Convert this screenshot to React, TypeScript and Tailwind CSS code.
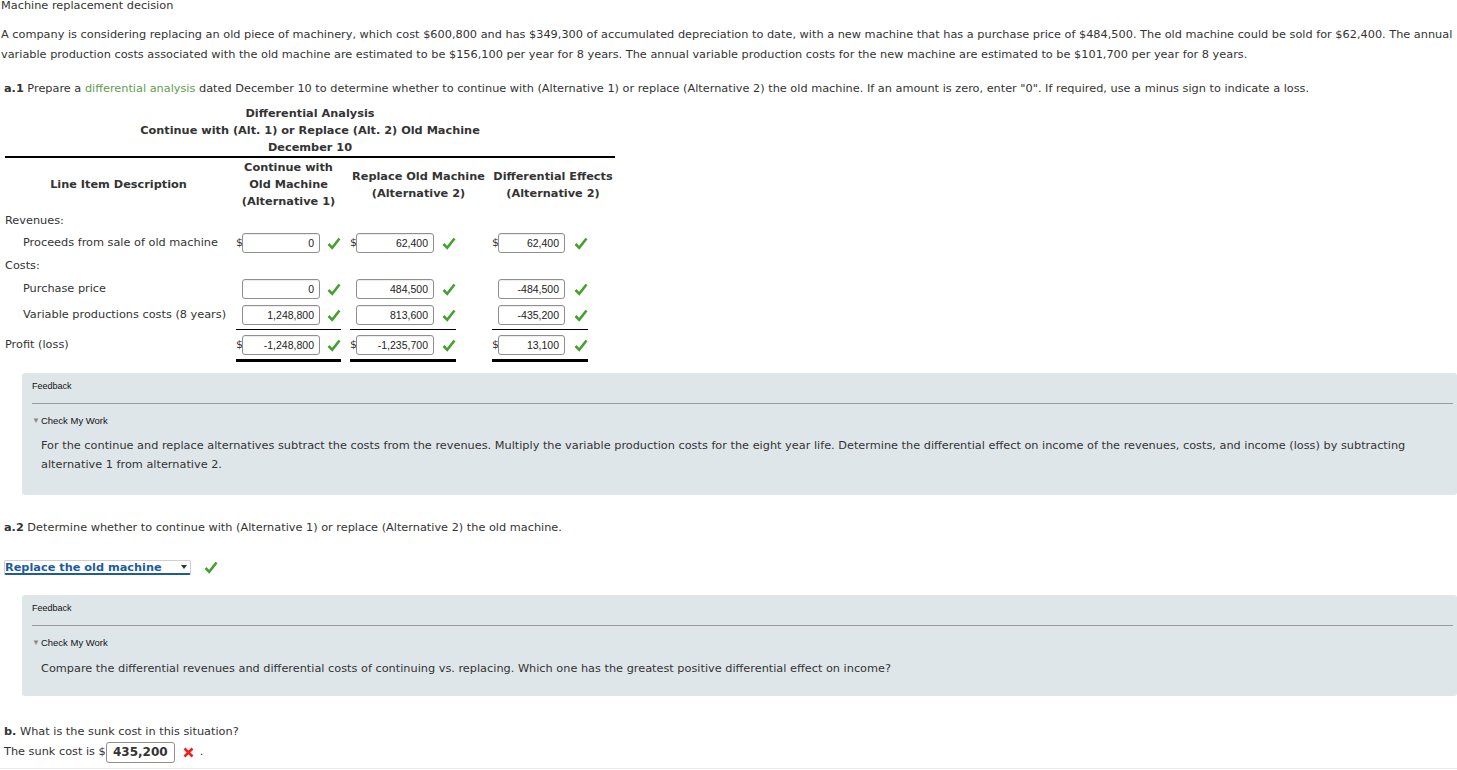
import type { ReactNode } from "react";

const body = "font-['DejaVu_Sans',Verdana,sans-serif] text-[11.3px] text-[#333]";

function Check() {
  return (
    <svg width="14" height="13" viewBox="0 0 14 13" className="shrink-0">
      <path d="M1.5 7 L5.2 10.8 L12.5 1.5" fill="none" stroke="#45a12f" strokeWidth="2.6" strokeLinejoin="miter" />
    </svg>
  );
}

function Cross() {
  return (
    <svg width="11" height="11" viewBox="0 0 11 11" className="shrink-0">
      <path d="M1.5 1.5 L9.5 9.5 M9.5 1.5 L1.5 9.5" fill="none" stroke="#e8231f" strokeWidth="2.6" />
    </svg>
  );
}

type CellProps = {
  value?: string;
  dollar?: boolean;
  pad: string;
  inputW: string;
  gap: string;
  line?: "single" | "double";
};

function AmountCell({ value, dollar, pad, inputW, gap, line }: CellProps) {
  if (value === undefined) return <div />;
  const lineCls = line === "single" ? "border-b border-black pb-[4px]" : line === "double" ? "border-b-[3px] border-black pb-[4px]" : "";
  return (
    <div className={`flex items-start ${pad}`}>
      <div className={`flex items-center ${lineCls}`}>
        <span className={`w-[6px] text-[11px] leading-[20px] ${dollar ? "" : "invisible"}`}>$</span>
        <div
          className={`${inputW} h-[20px] rounded-[3px] border border-[#8f8f8f] bg-white pr-[5px] text-right font-['Liberation_Sans',Arial,sans-serif] text-[10.5px] leading-[18px] text-[#222] shadow-[inset_0_1px_1px_rgba(0,0,0,0.08)]`}
        >
          {value}
        </div>
        <span className={gap}>
          <Check />
        </span>
      </div>
    </div>
  );
}

const cols = "grid grid-cols-[227px_113px_145px_125px]";

type Row = {
  label: string;
  indent?: boolean;
  vals?: [string, string, string];
  dollar?: boolean;
  line?: "single" | "double";
  h: string;
};

const rows: Row[] = [
  { label: "Revenues:", h: "h-[19px]" },
  { label: "Proceeds from sale of old machine", indent: true, vals: ["0", "62,400", "62,400"], dollar: true, h: "h-[26px] pt-[3px]" },
  { label: "Costs:", h: "h-[20px]" },
  { label: "Purchase price", indent: true, vals: ["0", "484,500", "-484,500"], h: "h-[26px] pt-[3px]" },
  { label: "Variable productions costs (8 years)", indent: true, vals: ["1,248,800", "813,600", "-435,200"], line: "single", h: "h-[28px] pt-[3px]" },
  { label: "Profit (loss)", vals: ["-1,248,800", "-1,235,700", "13,100"], dollar: true, line: "double", h: "h-[32px] pt-[5px]" },
];

function Feedback({ children, className }: { children: ReactNode; className: string }) {
  return (
    <div className={`ml-[22px] rounded-[3px] bg-[#dfe6ea] pl-[10px] pr-[4px] ${className}`}>
      <div className="h-[30px] pt-[7px] font-['Liberation_Sans',Arial,sans-serif] text-[9px] leading-[12px] text-[#111]">Feedback</div>
      <div className="border-t border-[#9a9a9a]" />
      <div className="mt-[11px] flex items-center font-['Liberation_Sans',Arial,sans-serif] text-[9.5px] leading-[12px] text-[#111]">
        <span className="mr-[1px] text-[8px] text-[#8a8a8a]">▼</span>
        Check My Work
      </div>
      {children}
    </div>
  );
}

export default function App() {
  return (
    <div className={`${body} h-[770px] w-[1457px] overflow-hidden bg-white`}>
      <div className="pl-[1px] text-[11.3px] leading-[12px]">Machine replacement decision</div>

      <p className="mt-[13px] pl-[1px] pr-[4px] leading-[20px]">
        A company is considering replacing an old piece of machinery, which cost $600,800 and has $349,300 of accumulated depreciation to date, with a new machine that has a purchase price of $484,500. The old machine could be sold for $62,400. The annual variable production costs associated with the old machine are estimated to be $156,100 per year for 8 years. The annual variable production costs for the new machine are estimated to be $101,700 per year for 8 years.
      </p>

      <p className="mt-[14px] pl-[4px] leading-[20px]">
        <b>a.1</b> Prepare a <span className="text-[#5f9d4f]">differential analysis</span> dated December 10 to determine whether to continue with (Alternative 1) or replace (Alternative 2) the old machine. If an amount is zero, enter "0". If required, use a minus sign to indicate a loss.
      </p>

      <div className="ml-[5px] mt-[6px] w-[610px]">
        <div className="border-b-2 border-black text-center font-bold leading-[17px]">
          <div>Differential Analysis</div>
          <div>Continue with (Alt. 1) or Replace (Alt. 2) Old Machine</div>
          <div>December 10</div>
        </div>
        <div className={`${cols} h-[53px] items-center text-center font-bold leading-[17px]`}>
          <div>Line Item Description</div>
          <div>
            Continue with
            <br />
            Old Machine
            <br />
            (Alternative 1)
          </div>
          <div className="pl-[2px]">
            Replace Old Machine
            <br />
            (Alternative 2)
          </div>
          <div className="pl-[1px]">
            Differential Effects
            <br />
            (Alternative 2)
          </div>
        </div>

        {rows.map((r) => (
          <div key={r.label} className={`${cols} ${r.h}`}>
            <div className={`flex h-[20px] items-center whitespace-nowrap ${r.indent ? "pl-[18px]" : ""}`}>{r.label}</div>
            {r.vals ? (
              <>
                <AmountCell value={r.vals[0]} dollar={r.dollar} pad="pl-[4px]" inputW="w-[78px]" gap="ml-[7px]" line={r.line} />
                <AmountCell value={r.vals[1]} dollar={r.dollar} pad="pl-[5px]" inputW="w-[78px]" gap="ml-[8px]" line={r.line} />
                <AmountCell value={r.vals[2]} dollar={r.dollar} pad="pl-[2px]" inputW="w-[67px]" gap="ml-[9px]" line={r.line} />
              </>
            ) : null}
          </div>
        ))}
      </div>

      <Feedback className="mt-[11px] h-[122px]">
        <p className="mt-[9px] pl-[9px] pr-[40px] leading-[19px]">
          For the continue and replace alternatives subtract the costs from the revenues. Multiply the variable production costs for the eight year life. Determine the differential effect on income of the revenues, costs, and income (loss) by subtracting alternative 1 from alternative 2.
        </p>
      </Feedback>

      <p className="mt-[23px] pl-[4px] leading-[20px]">
        <b>a.2</b> Determine whether to continue with (Alternative 1) or replace (Alternative 2) the old machine.
      </p>

      <div className="mt-[22px] flex items-center pl-[4px]">
        <div className="relative flex h-[15px] w-[187px] items-center rounded-[2px] border border-[#cfcfcf] border-b-2 border-b-[#1b5c9e] pr-[12px] font-bold text-[#1b5c9e]">
          <span className="leading-[13px]">Replace the old machine</span>
          <svg width="6" height="4" viewBox="0 0 6 4" className="absolute right-[3px] top-[4px]">
            <path d="M0 0 H6 L3 4 Z" fill="#333" />
          </svg>
        </div>
        <span className="ml-[13px]">
          <Check />
        </span>
      </div>

      <Feedback className="mt-[20px] h-[101px]">
        <p className="mt-[10px] pl-[9px] leading-[19px]">
          Compare the differential revenues and differential costs of continuing vs. replacing. Which one has the greatest positive differential effect on income?
        </p>
      </Feedback>

      <p className="mt-[26px] pl-[4px] leading-[20px]">
        <b>b.</b> What is the sunk cost in this situation?
      </p>
      <div className="flex h-[21px] items-center pl-[4px]">
        <span>The sunk cost is $</span>
        <div className="h-[21px] w-[69px] rounded-[3px] border border-[#8f8f8f] bg-white text-center text-[12px] font-bold leading-[19px] text-[#333]">
          435,200
        </div>
        <span className="ml-[8px]">
          <Cross />
        </span>
        <span className="ml-[6px]">.</span>
      </div>
      <div className="mt-[5px] border-b border-[#ececec]" />
    </div>
  );
}
